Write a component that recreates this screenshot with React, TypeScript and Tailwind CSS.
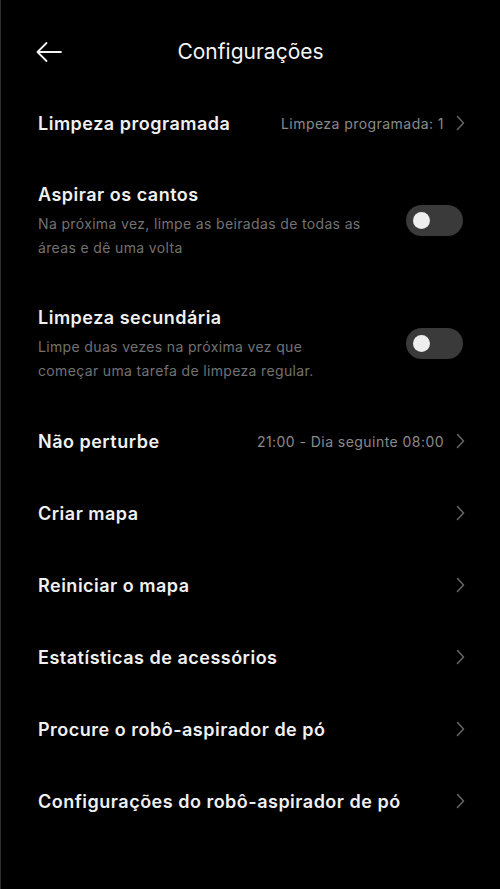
import React from 'react'

const Chevron = () => (
  <svg width="10" height="16" viewBox="0 0 10 16" fill="none" className="shrink-0">
    <path d="M2.5 1.5L8.5 8L2.5 14.5" stroke="#666666" strokeWidth="1.5" strokeLinecap="round" strokeLinejoin="round" />
  </svg>
)

const Toggle = () => (
  <div className="w-[57px] h-[31px] rounded-full bg-[#3a3a3a] flex items-center pl-[7px] shrink-0 -mt-[4px]">
    <div className="w-[17px] h-[17px] rounded-full bg-[#eeeeee]" />
  </div>
)

const LinkRow = ({ label, value }: { label: string; value?: string }) => (
  <div className="h-[72px] flex items-center justify-between pl-[37px] pr-[35px]">
    <span className="text-[18px] font-semibold tracking-[0.5px] text-[#f0f0f0]">{label}</span>
    <div className="flex items-center gap-[11px]">
      {value && <span className="text-[14px] tracking-[0.45px] text-[#8a8a8a]">{value}</span>}
      <Chevron />
    </div>
  </div>
)

const ToggleRow = ({ label, desc }: { label: string; desc: string[] }) => (
  <div className="h-[123px] flex items-center justify-between pl-[37px] pr-[37px] pt-[25px] pb-[22px]">
    <div className="flex flex-col">
      <span className="text-[18px] font-semibold tracking-[0.5px] text-[#f0f0f0] leading-[22px]">{label}</span>
      <div className="mt-[6px] text-[14px] tracking-[0.35px] leading-[24px] text-[#727272]">
        {desc.map((d, i) => (
          <div key={i}>{d}</div>
        ))}
      </div>
    </div>
    <Toggle />
  </div>
)

export default function App() {
  return (
    <div
      className="w-[500px] h-[889px] bg-black border-l border-[#2e2e2e] overflow-hidden"
      style={{ fontFamily: 'Inter, "Noto Sans", sans-serif' }}
    >
      <div className="h-[87px] relative flex items-center justify-center">
        <svg width="28" height="22" viewBox="0 0 28 22" fill="none" className="absolute left-[33px] top-[41px]">
          <path d="M27 11H3.5M12.5 2L3.5 11L12.5 20" stroke="#f2f2f2" strokeWidth="1.8" strokeLinecap="round" strokeLinejoin="round" />
        </svg>
        <span className="text-[21px] text-[#f5f5f5] mt-[17px]">Configurações</span>
      </div>
      <LinkRow label="Limpeza programada" value="Limpeza programada: 1" />
      <ToggleRow label="Aspirar os cantos" desc={['Na próxima vez, limpe as beiradas de todas as', 'áreas e dê uma volta']} />
      <ToggleRow label="Limpeza secundária" desc={['Limpe duas vezes na próxima vez que', 'começar uma tarefa de limpeza regular.']} />
      <LinkRow label="Não perturbe" value="21:00 - Dia seguinte 08:00" />
      <LinkRow label="Criar mapa" />
      <LinkRow label="Reiniciar o mapa" />
      <LinkRow label="Estatísticas de acessórios" />
      <LinkRow label="Procure o robô-aspirador de pó" />
      <LinkRow label="Configurações do robô-aspirador de pó" />
    </div>
  )
}
